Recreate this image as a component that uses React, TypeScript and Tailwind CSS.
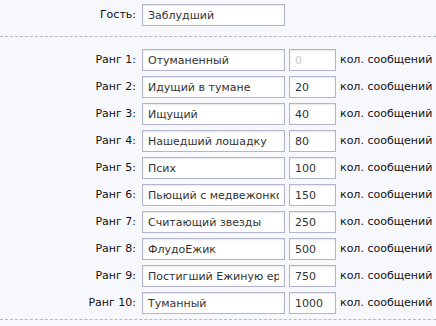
const RANKS: { name: string; posts: string; disabled?: boolean }[] = [
  { name: 'Отуманенный', posts: '0', disabled: true },
  { name: 'Идущий в тумане', posts: '20' },
  { name: 'Ищущий', posts: '40' },
  { name: 'Нашедший лошадку', posts: '80' },
  { name: 'Псих', posts: '100' },
  { name: 'Пьющий с медвежонком', posts: '150' },
  { name: 'Считающий звезды', posts: '250' },
  { name: 'ФлудоЕжик', posts: '500' },
  { name: 'Постигший Ежиную ерепень', posts: '750' },
  { name: 'Туманный', posts: '1000' },
];

const inputCls =
  'h-[22px] shrink-0 border border-[#b3b5cc] bg-white px-[5px] text-[11px] text-[#333] shadow-[inset_0_1px_2px_rgba(0,0,0,0.1)] outline-none';

export default function App() {
  return (
    <div
      className="min-h-[326px] w-[436px] overflow-hidden bg-[#f7f8fc] text-[11px] text-[#111]"
      style={{ fontFamily: 'Tahoma, "DejaVu Sans", sans-serif' }}
    >
      <div className="flex items-center pt-[4px] pb-[10px]">
        <label className="w-[137px] shrink-0 pr-[1px] text-right">Гость:</label>
        <input className={`${inputCls} ml-[5px] w-[143px]`} defaultValue="Заблудший" readOnly />
      </div>

      <div className="border-t border-dashed border-[#b0b7d0]" />

      <div className="flex flex-col gap-[5px] pt-[12px] pb-[5px]">
        {RANKS.map((r, i) => (
          <div key={i} className="flex items-center">
            <label className="w-[137px] shrink-0 pr-[1px] text-right">Ранг {i + 1}:</label>
            <input className={`${inputCls} ml-[5px] w-[143px]`} defaultValue={r.name} readOnly />
            <input
              className={`${inputCls} ml-[4px] w-[47px] ${r.disabled ? 'text-[#c8c8c8]' : ''}`}
              defaultValue={r.posts}
              readOnly
            />
            <span className="ml-[4px] shrink-0 whitespace-nowrap">кол. сообщений</span>
          </div>
        ))}
      </div>

      <div className="border-t border-dashed border-[#b0b7d0]" />
    </div>
  );
}
